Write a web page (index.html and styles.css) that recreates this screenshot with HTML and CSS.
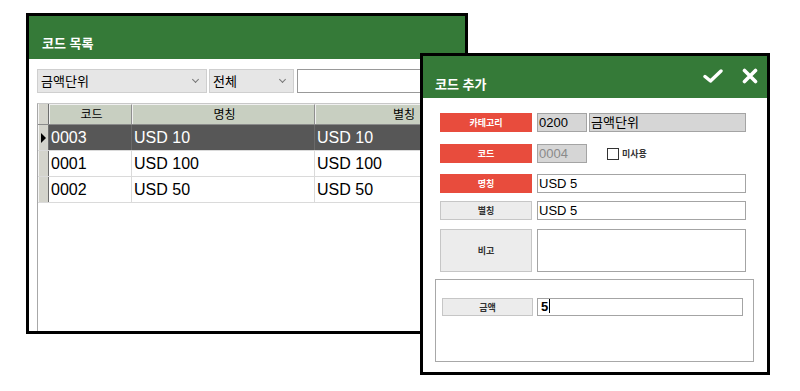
FILE: index.html
```html
<!DOCTYPE html>
<html lang="ko">

<head>
    <meta charset="utf-8">
    <title>코드 관리</title>
    <link rel="stylesheet" href="styles.css">
</head>

<body>
    <div class="desktop">
        <div class="window list-window">
            <div class="win-header">코드 목록</div>
            <div class="list-body">
                <div class="toolbar">
                    <div class="combo combo-wide">금액단위<span class="chev"></span></div>
                    <div class="combo combo-narrow">전체<span class="chev"></span></div>
                    <div class="search"></div>
                </div>
                <div class="grid">
                    <div class="grid-row head">
                        <div class="rowhead"></div>
                        <div class="cell">코드</div>
                        <div class="cell">명칭</div>
                        <div class="cell">별칭</div>
                    </div>
                    <div class="grid-row selected">
                        <div class="rowhead"><span class="pointer"></span></div>
                        <div class="cell">0003</div>
                        <div class="cell">USD 10</div>
                        <div class="cell">USD 10</div>
                    </div>
                    <div class="grid-row">
                        <div class="rowhead"></div>
                        <div class="cell">0001</div>
                        <div class="cell">USD 100</div>
                        <div class="cell">USD 100</div>
                    </div>
                    <div class="grid-row">
                        <div class="rowhead"></div>
                        <div class="cell">0002</div>
                        <div class="cell">USD 50</div>
                        <div class="cell">USD 50</div>
                    </div>
                </div>
            </div>
        </div>

        <div class="window dialog">
            <div class="win-header dlg-header">
                <span>코드 추가</span>
                <div class="actions">
                    <svg width="20" height="16" viewBox="0 0 20 16">
                        <path d="M2 8.5 L7.5 13 L18 3" fill="none" stroke="#fff" stroke-width="3.4" stroke-linecap="round" stroke-linejoin="round"/>
                    </svg>
                    <svg width="16" height="16" viewBox="0 0 16 16">
                        <path d="M2.5 2.5 L13.5 13.5 M13.5 2.5 L2.5 13.5" fill="none" stroke="#fff" stroke-width="3.6" stroke-linecap="round"/>
                    </svg>
                </div>
            </div>
            <div class="form">
                <div class="field">
                    <div class="label req">카테고리</div>
                    <div class="inputs">
                        <div class="box gray code">0200</div>
                        <div class="box gray fill">금액단위</div>
                    </div>
                </div>
                <div class="field gap-code">
                    <div class="label req">코드</div>
                    <div class="inputs">
                        <div class="box gray code muted">0004</div>
                        <label class="check"><span class="checkbox"></span>미사용</label>
                    </div>
                </div>
                <div class="field gap-name">
                    <div class="label req">명칭</div>
                    <div class="box">USD 5</div>
                </div>
                <div class="field gap-alias">
                    <div class="label">별칭</div>
                    <div class="box">USD 5</div>
                </div>
                <div class="field tall">
                    <div class="label">비고</div>
                    <div class="box"></div>
                </div>
                <div class="group">
                    <div class="field amount">
                        <div class="label">금액</div>
                        <div class="box bold">5<span class="caret"></span></div>
                    </div>
                </div>
            </div>
        </div>
    </div>
</body>

</html>
```

FILE: styles.css
```css
body {
    margin: 0;
    background-color: #fff;
    font-family: "Liberation Sans", "Noto Sans CJK KR", sans-serif;
}

.desktop {
    position: relative;
    width: 800px;
    height: 391px;
    overflow: hidden;
}

.window {
    position: absolute;
    box-sizing: border-box;
    border: 3px solid #000;
    background-color: #fff;
    overflow: hidden;
    display: flex;
    flex-direction: column;
}

.list-window {
    left: 26px;
    top: 13px;
    width: 442px;
    height: 321px;
}

.dialog {
    left: 420px;
    top: 53px;
    width: 350px;
    height: 322px;
}

.win-header {
    background-color: rgb(53, 122, 56);
    color: #fff;
    font-family: "Noto Sans CJK KR", sans-serif;
    font-size: 13px;
    font-weight: bold;
    height: 43px;
    box-sizing: border-box;
    padding: 17px 0 0 13px;
    flex-shrink: 0;
}

.list-body {
    flex: 1;
    padding: 10px 0 0 8px;
    display: flex;
    flex-direction: column;
    overflow: hidden;
}

.toolbar {
    display: flex;
    height: 24px;
    width: 480px;
}

.combo {
    position: relative;
    box-sizing: border-box;
    height: 24px;
    background-color: #e6e6e6;
    border: 1px solid #cfcfcf;
    font-family: "Noto Sans CJK KR", sans-serif;
    font-size: 13px;
    line-height: 21px;
    padding-left: 3px;
}

.combo-wide {
    width: 170px;
}

.combo-narrow {
    width: 85px;
    margin-left: 2px;
}

.chev {
    position: absolute;
    right: 8px;
    top: 7px;
    width: 4px;
    height: 4px;
    border-right: 1px solid #777;
    border-bottom: 1px solid #777;
    transform: rotate(45deg);
}

.search {
    flex: 1;
    margin-left: 3px;
    box-sizing: border-box;
    border: 1px solid #999;
    background-color: #fff;
}

.grid {
    margin-top: 10px;
    flex: 1;
    width: 480px;
    border-left: 1px solid #a8a8a8;
    border-top: 1px solid #c8c8c8;
}

.grid-row {
    display: grid;
    grid-template-columns: 11px 83px 183px 176px;
    height: 25px;
    border-bottom: 1px solid #dadada;
    font-size: 16px;
}

.grid-row.head {
    height: 20px;
    border-bottom: 1px solid #8a8a8a;
    font-family: "Noto Sans CJK KR", sans-serif;
    font-size: 12px;
}

.grid-row.head .cell {
    background-color: rgb(200, 207, 193);
    border-top: 1px solid #f0f0f0;
    border-left: 1px solid #f0f0f0;
    border-right: 1px solid #8f8f8f;
    text-align: center;
    line-height: 18px;
}

.cell {
    box-sizing: border-box;
    border-right: 1px solid #dadada;
    padding-left: 2px;
    line-height: 25px;
    white-space: nowrap;
}

.rowhead {
    position: relative;
    background-color: #d4d4cc;
    border-right: 1px solid #6e6e6e;
    border-left: 1px solid #f4f4f4;
    box-sizing: border-box;
}

.selected .cell {
    background-color: #575757;
    color: #fff;
    border-right-color: #6a6a6a;
}

.pointer {
    position: absolute;
    left: 2px;
    top: 8px;
    border-left: 5px solid #000;
    border-top: 5px solid transparent;
    border-bottom: 5px solid transparent;
}

.dlg-header {
    height: 42px;
    display: flex;
    justify-content: space-between;
    padding: 18px 0 0 12px;
}

.actions {
    display: flex;
    gap: 19px;
    margin-top: -6px;
    padding-right: 9px;
}

.form {
    padding: 15px 0 0 17px;
    display: flex;
    flex-direction: column;
}

.field {
    display: grid;
    grid-template-columns: 92px 209px;
    column-gap: 5px;
    height: 19px;
}

.gap-code {
    margin-top: 12px;
}

.gap-name {
    margin-top: 11px;
}

.gap-alias {
    margin-top: 8px;
}

.field.tall {
    margin-top: 9px;
    height: 43px;
}

.label {
    box-sizing: border-box;
    background-color: #ececec;
    border: 1px solid #c6c6c6;
    font-family: "Noto Sans CJK KR", sans-serif;
    font-size: 9px;
    font-weight: bold;
    color: #333;
    display: flex;
    align-items: center;
    justify-content: center;
}

.label.req {
    background-color: rgb(232, 76, 61);
    border-color: rgb(232, 76, 61);
    color: #fff;
}

.inputs {
    display: flex;
    gap: 2px;
}

.box {
    box-sizing: border-box;
    border: 1px solid #a4a4a4;
    background-color: #fff;
    font-size: 13px;
    line-height: 17px;
    padding-left: 1px;
    font-family: "Liberation Sans", "Noto Sans CJK KR", sans-serif;
}

.box.gray {
    background-color: #d6d6d6;
}

.box.code {
    width: 50px;
}

.box.fill {
    flex: 1;
}

.box.muted {
    color: #8a8a8a;
}

.check {
    display: flex;
    align-items: center;
    gap: 3px;
    margin-left: 18px;
    font-family: "Noto Sans CJK KR", sans-serif;
    font-size: 9px;
    font-weight: bold;
    color: #333;
}

.checkbox {
    width: 10px;
    height: 10px;
    border: 1px solid #333;
    background-color: #fff;
}

.group {
    margin: 7px 0 0 -5px;
    width: 319px;
    height: 83px;
    box-sizing: border-box;
    border: 1px solid #a8a8a8;
    padding: 18px 0 0 6px;
}

.field.amount {
    grid-template-columns: 91px 206px;
    column-gap: 4px;
    height: 18px;
}

.box.bold {
    font-weight: bold;
    line-height: 16px;
    padding-left: 3px;
}

.caret {
    display: inline-block;
    width: 1px;
    height: 14px;
    background-color: #000;
    vertical-align: -2px;
    margin-left: 1px;
}
```
